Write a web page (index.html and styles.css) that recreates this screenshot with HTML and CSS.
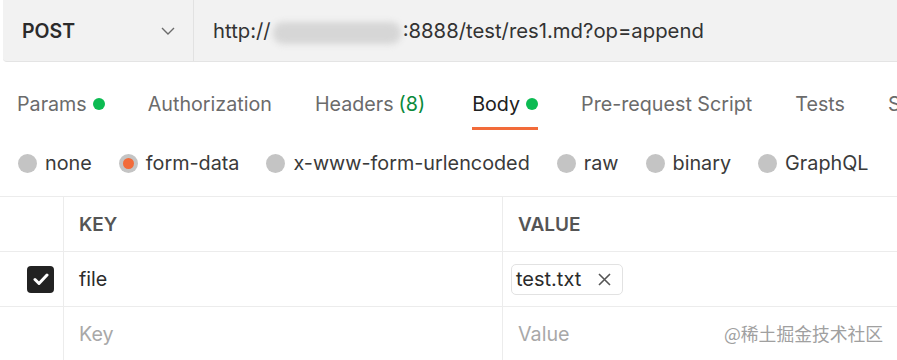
FILE: index.html
```html
<!DOCTYPE html>
<html lang="en">
<head>
    <meta charset="UTF-8">
    <title>Request</title>
    <link rel="stylesheet" href="styles.css">
</head>
<body>
    <div class="url-bar">
        <div class="method">
            <span>POST</span>
            <svg class="chevron" width="14" height="8" viewBox="0 0 14 8"><path d="M1 1l6 6 6-6" fill="none" stroke="#6b6b6b" stroke-width="1.4"/></svg>
        </div>
        <div class="url">http://<span class="blurred"></span>:8888/test/res1.md?op=append</div>
    </div>

    <div class="tabs">
        <div class="tab">Params <span class="dot"></span></div>
        <div class="tab">Authorization</div>
        <div class="tab">Headers <span class="count">(8)</span></div>
        <div class="tab active">Body <span class="dot"></span></div>
        <div class="tab">Pre-request Script</div>
        <div class="tab">Tests</div>
        <div class="tab">Settings</div>
    </div>

    <div class="body-types">
        <label class="radio"><span class="circle"></span>none</label>
        <label class="radio"><span class="circle selected"></span>form-data</label>
        <label class="radio"><span class="circle"></span>x-www-form-urlencoded</label>
        <label class="radio"><span class="circle"></span>raw</label>
        <label class="radio"><span class="circle"></span>binary</label>
        <label class="radio"><span class="circle"></span>GraphQL</label>
    </div>

    <div class="table">
        <div class="row head">
            <div class="cell check"></div>
            <div class="cell key">KEY</div>
            <div class="cell value">VALUE</div>
        </div>
        <div class="row">
            <div class="cell check">
                <span class="checkbox"><svg width="16" height="13" viewBox="0 0 16 13"><path d="M2 6.5l4 4 8-8.5" fill="none" stroke="#fff" stroke-width="3" stroke-linecap="round" stroke-linejoin="round"/></svg></span>
            </div>
            <div class="cell key">file</div>
            <div class="cell value">
                <span class="chip">test.txt
                    <svg class="close" width="13" height="13" viewBox="0 0 13 13"><path d="M1 1l11 11M12 1L1 12" stroke="#555" stroke-width="1.6"/></svg>
                </span>
            </div>
        </div>
        <div class="row">
            <div class="cell check"></div>
            <div class="cell key placeholder">Key</div>
            <div class="cell value placeholder">Value</div>
        </div>
        <div class="watermark">@稀土掘金技术社区</div>
    </div>
</body>
</html>
```

FILE: styles.css
```css
body {
    margin: 0;
    font-family: Inter, "Noto Sans", sans-serif;
    background: #fff;
    color: #212121;
    overflow: hidden;
    width: 897px;
    height: 360px;
}

.url-bar {
    display: flex;
    height: 62px;
    margin-left: 3px;
    background: #f2f2f2;
    border-bottom: 1px solid #e4e4e4;
    border-bottom-left-radius: 4px;
    box-sizing: border-box;
}

.method {
    width: 191px;
    display: flex;
    align-items: center;
    justify-content: space-between;
    padding: 0 18px 0 19px;
    box-sizing: border-box;
    border-right: 1px solid #e2e2e2;
    font-size: 19.5px;
    font-weight: 600;
    color: #2b2b2b;
}

.url {
    display: flex;
    align-items: center;
    padding-left: 19px;
    font-size: 20.3px;
    color: #333;
    white-space: nowrap;
}

.blurred {
    display: inline-block;
    width: 128px;
    height: 22px;
    margin: 4px 2px 0;
    border-radius: 10px;
    background: #d6d6d6;
    filter: blur(3px);
}

.tabs {
    display: flex;
    gap: 43px;
    padding: 30px 0 0 17px;
    white-space: nowrap;
}

.tab {
    display: flex;
    align-items: center;
    font-size: 19.7px;
    line-height: 24px;
    color: #6b6b6b;
    padding-bottom: 11px;
    border-bottom: 3px solid transparent;
}

.tab.active {
    color: #212121;
    border-bottom-color: #f26b3a;
    margin-left: 4px;
}

.dot {
    display: inline-block;
    width: 12px;
    height: 12px;
    border-radius: 50%;
    background: #0cbb52;
    margin-left: 6px;
}

.count {
    color: #0a8a3b;
    margin-left: 5px;
}

.body-types {
    display: flex;
    gap: 27px;
    padding: 21px 0 0 18px;
    height: 45px;
    white-space: nowrap;
}

.radio {
    display: flex;
    align-items: center;
    gap: 8px;
    font-size: 19.8px;
    color: #3a3a3a;
    height: 24px;
}

.circle {
    width: 19px;
    height: 19px;
    border-radius: 50%;
    background: #c4c4c4;
    display: flex;
    align-items: center;
    justify-content: center;
}

.circle.selected::after {
    content: "";
    width: 11px;
    height: 11px;
    border-radius: 50%;
    background: #f26b3a;
}

.table {
    position: relative;
    border-top: 1px solid #ececec;
}

.row {
    display: flex;
    height: 54px;
    border-bottom: 1px solid #ececec;
}

.cell {
    display: flex;
    align-items: center;
    box-sizing: border-box;
    font-size: 19.7px;
}

.cell.check {
    width: 64px;
    border-right: 1px solid #ececec;
    padding-left: 27px;
}

.cell.key {
    width: 439px;
    border-right: 1px solid #ececec;
    padding-left: 15px;
    color: #2b2b2b;
}

.cell.value {
    flex: 1;
    padding-left: 15px;
    color: #2b2b2b;
}

.head .cell.key,
.head .cell.value {
    font-weight: 600;
    font-size: 19px;
    color: #555;
}

.cell.placeholder {
    color: #a8a8a8;
}

.checkbox {
    width: 27px;
    height: 27px;
    border-radius: 4px;
    background: #222;
    display: flex;
    align-items: center;
    justify-content: center;
}

.row .cell.value .chip {
    margin-left: -7px;
}

.chip {
    display: inline-flex;
    align-items: center;
    height: 31px;
    padding: 0 11px 0 4px;
    border: 1px solid #e2e2e2;
    border-radius: 5px;
    box-sizing: border-box;
    font-size: 20px;
    color: #2b2b2b;
}

.close {
    margin-left: 17px;
}

.watermark {
    position: absolute;
    left: 724px;
    top: 123px;
    font-family: "Noto Sans CJK SC", sans-serif;
    font-size: 17.8px;
    color: #a0a0a0;
    white-space: nowrap;
}
```
